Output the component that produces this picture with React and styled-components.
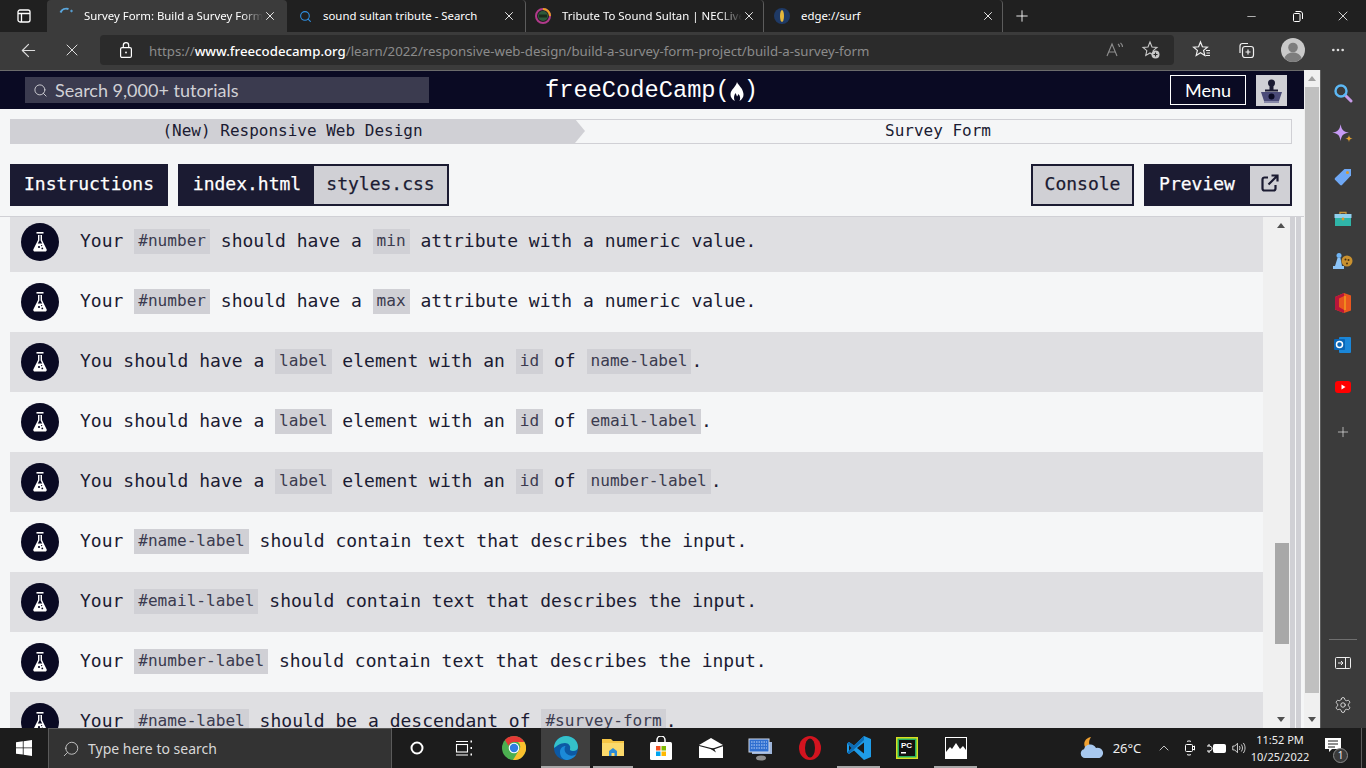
import React from "react";
import styled, { createGlobalStyle } from "styled-components";
import { ArrowLeft, X, Plus, Minus, Search, Settings, ChevronUp, Ellipsis } from "lucide-react";

const GlobalStyle = createGlobalStyle`
  html, body {
    margin: 0;
    padding: 0;
    width: 1366px;
    height: 768px;
    overflow: hidden;
    background: #202020;
  }
  * { box-sizing: border-box; }
`;

const UI_FONT = `"Noto Sans", "Open Sans", sans-serif`;
const MONO_FONT = `"DejaVu Sans Mono", "Liberation Mono", monospace`;

// === Browser chrome ===
const Screen = styled.div`
  width: 1366px;
  height: 768px;
  display: flex;
  flex-direction: column;
  overflow: hidden;
`;

const TabStrip = styled.div`
  height: 32px;
  flex: none;
  display: flex;
  align-items: stretch;
  background: #202020;
  color: #fff;
  font: 11.4px ${UI_FONT};
`;

const StripIcon = styled.div`
  width: 47px;
  display: flex;
  align-items: center;
  justify-content: center;
`;

const Tab = styled.div`
  width: ${({ $width }) => $width}px;
  display: flex;
  align-items: center;
  padding: 0 ${({ $closeRight }) => $closeRight || 10}px 0 ${({ $iconLeft }) => $iconLeft || 12}px;
  border-radius: 4px 4px 0 0;
  background: ${({ $active }) => ($active ? "#3b3b3b" : "transparent")};
  border-right: ${({ $divider }) => ($divider ? "1px solid #5c5c5c" : "none")};
  background-clip: padding-box;
`;

const TabIcon = styled.div`
  width: 16px;
  height: 16px;
  margin-right: ${({ $gap }) => $gap || 9}px;
  flex: none;
  display: flex;
  align-items: center;
  justify-content: center;
`;

const TabTitle = styled.span`
  flex: 1;
  white-space: nowrap;
  overflow: hidden;
  padding-bottom: 2px;
  -webkit-mask-image: ${({ $fade }) => ($fade ? "linear-gradient(90deg, #000 88%, transparent)" : "none")};
  mask-image: ${({ $fade }) => ($fade ? "linear-gradient(90deg, #000 88%, transparent)" : "none")};
`;

const NewTab = styled.div`
  width: 37px;
  display: flex;
  align-items: center;
  justify-content: center;
`;

const WindowControls = styled.div`
  margin-left: auto;
  display: flex;
`;

const WindowButton = styled.div`
  width: 46px;
  display: flex;
  align-items: center;
  justify-content: center;
`;

const AddressRow = styled.div`
  height: 38px;
  flex: none;
  display: flex;
  align-items: center;
  background: #3b3b3b;
  padding-bottom: 2px;
  color: #ddd;
`;

const NavIcon = styled.div`
  width: ${({ $w }) => $w || 44}px;
  height: 30px;
  flex: none;
  display: flex;
  align-items: center;
  justify-content: center;
  padding-left: ${({ $pad }) => $pad || 0}px;
`;

const AddressField = styled.div`
  width: 1074px;
  height: 30px;
  margin-left: 6px;
  margin-right: 5px;
  flex: none;
  display: flex;
  align-items: center;
  padding: 0 5px 0 19px;
  background: #2b2b2b;
  border-radius: 4px;
  font: 13.25px ${UI_FONT};
  color: #8b8b8b;
`;

const Url = styled.span`
  margin-left: 16px;
  padding-top: 2px;
  flex: 1;
  white-space: nowrap;
  b {
    font-weight: 500;
    color: #fff;
  }
`;

const Middle = styled.div`
  flex: 1;
  min-height: 0;
  display: flex;
`;

const Viewport = styled.div`
  width: 1304px;
  display: flex;
  flex-direction: column;
  background: #f5f6f7;
  color: #1b1b32;
  border-top: 1px solid #6b6b6b;
`;

const OuterScrollbar = styled.div`
  width: 16px;
  background: #f0f0f0;
  display: flex;
  flex-direction: column;
  align-items: center;
`;

const ArrowBox = styled.div`
  height: 17px;
  flex: none;
  display: flex;
  align-items: center;
  justify-content: center;
`;

const Triangle = styled.div`
  width: 0;
  height: 0;
  border-left: 4px solid transparent;
  border-right: 4px solid transparent;
  border-bottom: ${({ $down, $color }) => ($down ? "none" : `5px solid ${$color}`)};
  border-top: ${({ $down, $color }) => ($down ? `5px solid ${$color}` : "none")};
`;

const OuterThumbSpace = styled.div`
  flex: 1;
  width: 100%;
  display: flex;
`;

const OuterThumb = styled.div`
  width: 14px;
  height: 606px;
  margin-left: 1px;
  background: #c0c0c0;
`;

const SideBar = styled.div`
  width: 46px;
  background: #3b3b3b;
  border-left: 1px solid #5c5c5c;
  display: flex;
  flex-direction: column;
  align-items: center;
  padding: 2px 1px 0 0;
`;

const SideIcon = styled.div`
  width: 44px;
  height: ${({ $h }) => $h || 42}px;
  flex: none;
  display: flex;
  align-items: center;
  justify-content: center;
`;

const SideRule = styled.div`
  width: 28px;
  height: 1px;
  background: #6f6f6f;
  margin-top: auto;
  margin-bottom: 4px;
`;

// === freeCodeCamp page ===
const TopNav = styled.div`
  height: 38px;
  flex: none;
  display: grid;
  grid-template-columns: 1fr auto 1fr;
  align-items: center;
  background: #0a0a23;
  padding: 0 17px 0 25px;
`;

const SearchBox = styled.div`
  width: 404px;
  height: 26px;
  display: flex;
  align-items: center;
  gap: 7px;
  padding-left: 8px;
  background: #3b3b4f;
  color: #d0d0d5;
  font: 18px Lato, sans-serif;
`;

const Logo = styled.div`
  margin: 1px 9px 0 0;
  display: flex;
  align-items: center;
  color: #fff;
  font: 23.7px/32px "Liberation Mono", monospace;
`;

const NavRight = styled.div`
  justify-self: end;
  display: flex;
  align-items: center;
  gap: 10px;
`;

const MenuButton = styled.div`
  width: 76px;
  height: 30px;
  display: flex;
  align-items: center;
  justify-content: center;
  border: 1px solid #fff;
  color: #fff;
  font: 18px Lato, sans-serif;
`;

const Avatar = styled.div`
  width: 31px;
  height: 31px;
  background: #d0d0d5;
  display: flex;
  align-items: center;
  justify-content: center;
`;

const Breadcrumbs = styled.div`
  height: 25px;
  flex: none;
  margin: 10px 12px 0 10px;
  display: flex;
  font: 16px/23px ${MONO_FONT};
`;

const CrumbLeft = styled.div`
  width: 565px;
  background: #d0d0d5;
  text-align: center;
  position: relative;
  &::after {
    content: "";
    position: absolute;
    left: 100%;
    top: 0;
    border-left: 10px solid #d0d0d5;
    border-top: 12.5px solid transparent;
    border-bottom: 12.5px solid transparent;
  }
`;

const CrumbRight = styled.div`
  flex: 1;
  text-align: center;
  border: 1px solid #d0d0d5;
  border-left: none;
  padding-left: 10px;
  line-height: 21px;
`;

const ToolRow = styled.div`
  height: 42px;
  flex: none;
  margin: 20px 12px 10px 10px;
  display: flex;
  gap: 10px;
`;

const ToolGroup = styled.div`
  display: flex;
  background: #1b1b32;
  padding: ${({ $inset }) => ($inset ? "2px" : "0")};
  margin-left: ${({ $push }) => ($push ? "auto" : "0")};
`;

const ToolButton = styled.div`
  width: ${({ $w }) => $w}px;
  display: flex;
  align-items: center;
  justify-content: center;
  padding: 0 ${({ $nudge }) => $nudge || 0}px 4px 0;
  background: ${({ $light }) => ($light ? "#d0d0d5" : "#1b1b32")};
  color: ${({ $light }) => ($light ? "#1b1b32" : "#fff")};
  font: 18px ${MONO_FONT};
  -webkit-text-stroke: 0.25px ${({ $light }) => ($light ? "#1b1b32" : "#fff")};
`;

const ListArea = styled.div`
  flex: 1;
  min-height: 0;
  display: flex;
  border-top: 1px solid #d0d0d5;
  padding-left: 10px;
  overflow: hidden;
`;

const TestList = styled.div`
  width: 1253px;
  margin-top: -5px;
`;

const TestRow = styled.div`
  height: 60px;
  display: flex;
  align-items: center;
  padding-left: 11px;
  background: ${({ $shaded }) => ($shaded ? "#dfdfe2" : "transparent")};
`;

const Flask = styled.div`
  width: 38px;
  height: 38px;
  flex: none;
  border-radius: 50%;
  background: #0a0a23;
  display: flex;
  align-items: center;
  justify-content: center;
`;

const TestText = styled.p`
  margin: 0 0 0 21px;
  padding-bottom: 2px;
  font: 18px/26px ${MONO_FONT};
  white-space: pre;
`;

const Code = styled.code`
  display: inline-block;
  margin-top: 1px;
  background: #d0d0d5;
  color: #3b3b4f;
  font: 16.1px/23px ${MONO_FONT};
  padding: 0 4px 2px;
  vertical-align: top;
`;

const InnerScrollbar = styled.div`
  width: 27px;
  background: #f0f0f0;
  display: flex;
  flex-direction: column;
  align-items: center;
`;

const InnerArrow = styled.div`
  height: 17px;
  flex: none;
  width: 100%;
  padding-left: 9px;
  display: flex;
  align-items: center;
  justify-content: center;
`;

const InnerTrack = styled.div`
  flex: 1;
  width: 100%;
  padding: 309px 1px 0 12px;
`;

const InnerThumb = styled.div`
  height: 101px;
  background: #a8a8a8;
`;

const Rails = styled.div`
  flex: 1;
  display: flex;
  background: #f5f6f7;
`;

const Rail = styled.div`
  width: 5px;
  background: #d0d0d5;
  margin-right: 1px;
`;

// === Taskbar ===
const Taskbar = styled.div`
  height: 40px;
  flex: none;
  display: flex;
  align-items: stretch;
  background: #1c1c1c;
  color: #fff;
`;

const StartButton = styled.div`
  width: 48px;
  display: flex;
  align-items: center;
  justify-content: center;
`;

const TaskSearch = styled.div`
  width: 344px;
  display: flex;
  align-items: center;
  gap: 8px;
  padding-left: 13px;
  background: #333;
  border: 1px solid #5a5a5a;
  border-bottom: none;
  color: #d8d8d8;
  font: 14px ${UI_FONT};
`;

const TaskApps = styled.div`
  display: flex;
`;

const TaskApp = styled.div`
  width: ${({ $w }) => $w || 49}px;
  display: flex;
  align-items: center;
  justify-content: center;
  background: ${({ $active }) => ($active ? "#3f3f3f" : "transparent")};
  position: relative;
  &::after {
    content: "";
    display: ${({ $running }) => ($running ? "block" : "none")};
    position: absolute;
    left: ${({ $active }) => ($active ? 0 : 3)}px;
    right: ${({ $active }) => ($active ? 0 : 3)}px;
    bottom: 0;
    height: 2px;
    background: #a8a8a8;
  }
`;

const Tray = styled.div`
  margin-left: auto;
  display: flex;
  align-items: center;
  font: 13px ${UI_FONT};
  color: #eee;
`;

const TrayItem = styled.div`
  width: ${({ $w }) => $w}px;
  display: flex;
  align-items: center;
  justify-content: center;
`;

const Clock = styled.div`
  width: 68px;
  text-align: center;
  font: 11px/17px ${UI_FONT};
`;

const NotifyBox = styled.div`
  width: 38px;
  height: 100%;
  display: flex;
  align-items: center;
  justify-content: center;
  padding: 0 0 6px 0;
  position: relative;
`;

const NotifyBadge = styled.div`
  position: absolute;
  right: 4px;
  bottom: 5px;
  width: 15px;
  height: 15px;
  border-radius: 50%;
  background: #3a3a3a;
  border: 1px solid #8a8a8a;
  font: 10px/13px ${UI_FONT};
  text-align: center;
`;

const ShowDesktop = styled.div`
  width: 1px;
  height: 100%;
  margin: 0 4px 0 9px;
  background: #5c5c5c;
`;

// === Drawings ===
const FlaskIcon = () => (
  <svg width="14" height="20" viewBox="0 0 14 20">
    <rect x="3.5" y="0" width="7" height="1.6" fill="#fff" />
    <path d="M5 3h4v5l4.6 9.2c.5 1.2-.2 2.3-1.4 2.3H1.8C.6 19.5-.1 18.4.4 17.2L5 8z" fill="#fff" />
    <path d="M6.4 3.2h1.2v5.2l1.6 3.2H4.8l1.6-3.2z" fill="#0a0a23" />
    <circle cx="6" cy="15" r="1.1" fill="#0a0a23" />
    <circle cx="9.3" cy="16.4" r="0.9" fill="#0a0a23" />
    <circle cx="8.6" cy="13.6" r="0.7" fill="#0a0a23" />
  </svg>
);

const FccFlame = () => (
  <svg width="14" height="19" viewBox="0 0 14 19" style={{ marginTop: 2 }}>
    <path
      d="M7 0C8 3 13 6 13.5 12C13.8 15 12 17.5 9.5 19C10.5 17 10.5 14 8.5 12C8 13 7.5 14 7 14.5C6.5 13 6 12 5.5 11C3.8 13.5 3.5 16.5 4.8 19C2 17.5 .3 15 .5 12C.8 7.5 6 5 7 0z"
      fill="#fff"
    />
  </svg>
);

const TabsIcon = () => (
  <svg width="16" height="16" viewBox="0 0 16 16" fill="none" stroke="#fff" strokeWidth="1.3">
    <rect x="2" y="2" width="12" height="12" rx="2" />
    <path d="M2 5.5h12M5.5 5.5V14" />
  </svg>
);

const Spinner = () => (
  <svg width="16" height="16" viewBox="0 0 16 16" fill="none" stroke="#5aa7de" strokeWidth="2" style={{ marginTop: -8 }}>
    <path d="M1.5 8.5A6.5 6.5 0 0 1 9.5 5" />
    <circle cx="12.5" cy="7" r="0.8" fill="#5aa7de" strokeWidth="1" />
  </svg>
);

const NecFavicon = () => (
  <svg width="16" height="16" viewBox="0 0 16 16">
    <circle cx="8" cy="8" r="7" fill="none" stroke="#b03a8a" strokeWidth="2" />
    <path d="M8 1a7 7 0 0 1 7 7" fill="none" stroke="#e8a020" strokeWidth="2" />
    <circle cx="8" cy="8" r="5" fill="#2e5a3a" />
    <rect x="4" y="6.5" width="8" height="3" fill="#1a2a1a" />
  </svg>
);

const SurfFavicon = () => (
  <svg width="16" height="16" viewBox="0 0 16 16">
    <circle cx="8" cy="8" r="8" fill="#1f3a66" />
    <ellipse cx="8" cy="8" rx="2" ry="6" fill="#e5b73b" />
  </svg>
);

const RestoreIcon = () => (
  <svg width="11" height="11" viewBox="0 0 11 11" fill="none" stroke="#fff">
    <rect x="1.5" y="2.5" width="6.5" height="8" rx="1" />
    <path d="M3.5 0.5H8c1.5 0 2.5 1 2.5 2.5v5" />
  </svg>
);

const LockIcon = () => (
  <svg width="14" height="16" viewBox="0 0 14 16" fill="none" stroke="#fff" strokeWidth="1.2">
    <rect x="1.6" y="5.6" width="10.8" height="9.8" rx="1.5" />
    <path d="M4.3 5.6V3.4a2.7 2.7 0 0 1 5.4 0v2.2" />
    <circle cx="7" cy="10.5" r="0.9" fill="#fff" stroke="none" />
  </svg>
);

const ReadAloudIcon = () => (
  <svg width="18" height="16" viewBox="0 0 18 16" fill="none" stroke="#8f8f8f" strokeWidth="1.1">
    <path d="M1 14L6 2l5 12M3 10h6" />
    <path d="M12 2c1 .8 1.5 1.7 1.5 3M14.5 .8c1.3 1.2 2 2.5 2 4.2" />
  </svg>
);

const StarPlusIcon = () => (
  <svg width="20" height="20" viewBox="0 0 20 20" fill="none" stroke="#c8c8c8" strokeWidth="1.1">
    <path d="M9 2l2 5 5 .4-3.8 3.3 1 4.8L9 13l-4.2 2.5 1-4.8L2 7.4 7 7z" />
    <circle cx="14.5" cy="14.5" r="4" fill="#c8c8c8" stroke="none" />
    <path d="M14.5 12.5v4M12.5 14.5h4" stroke="#2b2b2b" />
  </svg>
);

const FavoritesIcon = () => (
  <svg width="20" height="20" viewBox="0 0 20 20" fill="none" stroke="#f0f0f0" strokeWidth="1.2">
    <path d="M8.5 2l1.9 4.8 5 .4-3.8 3.2 1.2 5-4.3-2.7-4.3 2.7 1.2-5L1.6 7.2l5-.4z" />
    <path d="M14 10.5h4M14.5 13h3.5M13.5 15.5h4.5" />
  </svg>
);

const CollectionsIcon = () => (
  <svg width="20" height="20" viewBox="0 0 20 20" fill="none" stroke="#f0f0f0" strokeWidth="1.2">
    <path d="M4 13V6c0-1.5 1-2.5 2.5-2.5H12" />
    <rect x="6.5" y="6.5" width="11" height="11" rx="2.5" />
    <path d="M12 9.5v5M9.5 12h5" />
  </svg>
);

const ProfileIcon = () => (
  <svg width="24" height="24" viewBox="0 0 24 24">
    <circle cx="12" cy="12" r="12" fill="#c9c9c9" />
    <circle cx="12" cy="9.5" r="4.8" fill="#7d7d7d" />
    <path d="M3.5 20c1.5-4 5-5.5 8.5-5.5s7 1.5 8.5 5.5A12 12 0 0 1 12 24a12 12 0 0 1-8.5-4z" fill="#7d7d7d" />
  </svg>
);

const CamperAvatar = () => (
  <svg width="25" height="28" viewBox="0 0 25 28">
    <circle cx="12.5" cy="7" r="3.5" fill="#1b1b32" />
    <rect x="10.5" y="10" width="4" height="4" fill="#1b1b32" />
    <rect x="6" y="13.5" width="13" height="2" fill="#1b1b32" />
    <path d="M2 16h21l-3 9H5z" fill="#4b4b78" />
    <circle cx="12.5" cy="20.5" r="3" fill="#0a0a23" />
    <rect x="5" y="25" width="15" height="2" fill="#8787a8" />
  </svg>
);

const ExternalIcon = () => (
  <svg width="18" height="18" viewBox="0 0 18 18" fill="none" stroke="#1b1b32" strokeWidth="2.2">
    <path d="M7 3.5H3.5A2 2 0 0 0 1.5 5.5v9a2 2 0 0 0 2 2h9a2 2 0 0 0 2-2V11" />
    <path d="M7.5 10.5L16 2M10.5 1.5h6v6" />
  </svg>
);

const SideSearch = () => (
  <svg width="20" height="20" viewBox="0 0 20 20" fill="none">
    <path d="M12 12l6 6" stroke="#c79be8" strokeWidth="3" strokeLinecap="round" />
    <circle cx="8" cy="8" r="5.5" stroke="#5cb8f5" strokeWidth="2.4" />
  </svg>
);

const Sparkle = () => (
  <svg width="24" height="24" viewBox="0 0 20 20">
    <path d="M8 1c.8 4.5 2 6.2 7 7-5 .8-6.2 2.5-7 7-.8-4.5-2-6.2-7-7 5-.8 6.2-2.5 7-7z" fill="#c79bf5" />
    <path d="M15 10c.3 2 .9 2.7 3 3-2.1.3-2.7 1-3 3-.3-2-.9-2.7-3-3 2.1-.3 2.7-1 3-3z" fill="#e0a030" />
  </svg>
);

const TagIcon = () => (
  <svg width="18" height="18" viewBox="0 0 18 18">
    <path d="M10.5 1H17v6.5l-9 9.5c-.6.5-1.2.5-1.8 0L1 11.8c-.5-.6-.5-1.2 0-1.8z" fill="#6fa8f5" />
    <circle cx="13.5" cy="4.5" r="1.5" fill="#d99a2b" />
  </svg>
);

const ToolboxIcon = () => (
  <svg width="18" height="16" viewBox="0 0 18 16">
    <path d="M6 3V1.5h6V3" fill="none" stroke="#c9973a" strokeWidth="1.3" />
    <rect x="0.5" y="3" width="17" height="4" fill="#8fd0ee" />
    <rect x="1" y="7" width="16" height="8" fill="#2fb5a8" />
    <circle cx="9" cy="8" r="1.4" fill="#d99a2b" />
  </svg>
);

const ChessCookie = () => (
  <svg width="20" height="18" viewBox="0 0 20 18">
    <circle cx="6" cy="3.5" r="2.5" fill="#6fb4f5" />
    <path d="M4.5 6h3l1.5 8H11v3H0v-3h2z" fill="#8cc4f7" />
    <circle cx="14" cy="9" r="5.5" fill="#c9912f" />
    <circle cx="12.5" cy="7.5" r="1" fill="#4a3010" />
    <circle cx="15.5" cy="8" r="1" fill="#4a3010" />
    <circle cx="14" cy="11.5" r="1" fill="#4a3010" />
  </svg>
);

const OfficeIcon = () => (
  <svg width="16" height="20" viewBox="0 0 16 20">
    <path d="M0 4l9-4 7 2.5v15L9 20l-9-3.5z" fill="#e8561e" />
    <path d="M0 4l9-4v3L4 5.5V14l5 3v3l-9-3.5z" fill="#b9153a" />
    <path d="M9 3h2v14H9z" fill="#f08a1e" />
  </svg>
);

const OutlookIcon = () => (
  <svg width="18" height="18" viewBox="0 0 18 18">
    <rect x="5" y="1" width="12" height="16" rx="1" fill="#1a86d8" />
    <rect x="0" y="3" width="11" height="11" rx="1" fill="#0a65b5" />
    <circle cx="5.5" cy="8.5" r="3" fill="none" stroke="#fff" strokeWidth="1.5" />
  </svg>
);

const YoutubeIcon = () => (
  <svg width="16" height="12" viewBox="0 0 16 12">
    <rect width="16" height="12" rx="3" fill="#f00" />
    <path d="M6.5 3.5v5l4-2.5z" fill="#fff" />
  </svg>
);

const SplitIcon = () => (
  <svg width="16" height="12" viewBox="0 0 16 12" fill="none" stroke="#eee">
    <rect x="0.5" y="0.5" width="15" height="11" rx="1" />
    <path d="M10.5 .5v11" />
    <path d="M3 6h5M6 4l2 2-2 2" />
  </svg>
);

const WinLogo = () => (
  <svg width="16" height="16" viewBox="0 0 16 16" fill="#fff">
    <path d="M0 2.3L6.8 1.3V7.5H0zM7.6 1.2L16 0v7.5H7.6zM0 8.3h6.8v6.3L0 13.7zM7.6 8.3H16V16l-8.4-1.2z" />
  </svg>
);

const Cortana = () => (
  <svg width="16" height="16" viewBox="0 0 16 16" fill="none" stroke="#fff" strokeWidth="2">
    <circle cx="8" cy="8" r="5.5" />
  </svg>
);

const TaskView = () => (
  <svg width="18" height="18" viewBox="0 0 18 18" fill="none" stroke="#fff" strokeWidth="1.1">
    <rect x="1.5" y="5.5" width="11" height="7.5" />
    <path d="M1 2.5h12M1 16h12" />
    <path d="M15.5 2.5h1.5M15.5 9h1.5M15.5 15.5h1.5" strokeWidth="1.8" />
  </svg>
);

const ChromeIcon = () => (
  <svg width="24" height="24" viewBox="0 0 24 24">
    <circle cx="12" cy="12" r="12" fill="#4caf50" />
    <path d="M12 0a12 12 0 0 1 10.4 6H12a6 6 0 0 0-5.6 3.8L3 4a12 12 0 0 1 9-4z" fill="#e53935" />
    <path d="M22.4 6A12 12 0 0 1 11 24l5.5-9A6 6 0 0 0 16 6z" fill="#fbc02d" />
    <circle cx="12" cy="12" r="5.3" fill="#fff" />
    <circle cx="12" cy="12" r="4.2" fill="#2f7de1" />
  </svg>
);

const EdgeIcon = () => (
  <svg width="24" height="24" viewBox="0 0 24 24">
    <circle cx="12" cy="12" r="12" fill="#0c59a4" />
    <path d="M0 12C0 5 5.5 0 12 0c7 0 12 5 12 11 0 2.5-2 4-5 4-2 0-3.5-.7-3-2 1-3-1.5-6-5-6-5 0-8 3-11 5z" fill="#35c1c9" />
    <path d="M12 24c-4-1-6-4-6-8 0-4 3-6 5.5-6-1.5 2-1.5 7 3 9 3 1.3 6 .5 8-1-2 3.5-6 6-10.5 6z" fill="#1b8ad8" />
  </svg>
);

const FolderIcon = () => (
  <svg width="22" height="20" viewBox="0 0 22 20">
    <path d="M0 1h9l2 2h11v15H0z" fill="#f6c544" />
    <path d="M0 5h22v13H0z" fill="#fbd96b" />
    <path d="M7 18v-5l4-3 4 3v5h-2.5v-3h-3v3z" fill="#2b8bd8" />
  </svg>
);

const StoreIcon = () => (
  <svg width="22" height="24" viewBox="0 0 22 24">
    <path d="M7 6V4a4 4 0 0 1 8 0v2" fill="none" stroke="#fff" strokeWidth="1.5" />
    <rect y="6" width="22" height="18" rx="1.5" fill="#fff" />
    <rect x="6" y="10" width="4.5" height="4.5" fill="#f25022" />
    <rect x="11.5" y="10" width="4.5" height="4.5" fill="#7fba00" />
    <rect x="6" y="15.5" width="4.5" height="4.5" fill="#00a4ef" />
    <rect x="11.5" y="15.5" width="4.5" height="4.5" fill="#ffb900" />
  </svg>
);

const MailIcon = () => (
  <svg width="24" height="20" viewBox="0 0 24 20">
    <path d="M0 7l12-7 12 7v13H0z" fill="#fff" />
    <path d="M0 7.5L14 11l10-3.5" fill="none" stroke="#1c1c1c" strokeWidth="1.2" />
    <path d="M11 10.5l6 4-2-4z" fill="#1c1c1c" />
  </svg>
);

const RemoteIcon = () => (
  <svg width="26" height="26" viewBox="0 0 26 26">
    <rect x="4" y="7" width="20" height="12" fill="#9db4d8" />
    <rect x="1" y="4" width="20" height="13" fill="#2f6fd0" stroke="#cfd8e8" />
    <path d="M3 7h16M3 10h16M3 13h16" stroke="#bcd4f5" strokeDasharray="1.5 1" />
    <ellipse cx="13" cy="23" rx="5" ry="2.5" fill="#8f8f8f" />
  </svg>
);

const OperaIcon = () => (
  <svg width="22" height="24" viewBox="0 0 22 24">
    <ellipse cx="11" cy="12" rx="11" ry="12" fill="#d3141f" />
    <ellipse cx="11" cy="12" rx="5" ry="9.5" fill="#1c1c1c" />
  </svg>
);

const VscodeIcon = () => (
  <svg width="24" height="24" viewBox="0 0 24 24">
    <path d="M17 0l7 3v18l-7 3-10-9.5L2 18l-2-1.5v-9L2 6l5 3.5z" fill="#1f9ce8" />
    <path d="M17 6.500L10 12l7 5.5z" fill="#1c1c1c" />
    <path d="M2 8.5v7l3.5-3.5z" fill="#1c1c1c" />
    <path d="M17 0l-10 9.5L2 6 0 7.500 4.5 12 0 16.500 2 18l15-14z" fill="#0d6cb5" />
  </svg>
);

const PycharmIcon = () => (
  <svg width="22" height="22" viewBox="0 0 22 22">
    <rect width="22" height="22" fill="#d8e020" />
    <rect x="1.5" y="1.5" width="19" height="19" fill="#24b060" />
    <rect x="3" y="3" width="16" height="16" fill="#111" />
    <text x="5" y="11" fontSize="8" fontWeight="700" fontFamily="Liberation Sans, sans-serif" fill="#fff">PC</text>
    <rect x="5" y="15" width="5" height="1.5" fill="#fff" />
  </svg>
);

const PhotosIcon = () => (
  <svg width="22" height="22" viewBox="0 0 22 22">
    <rect width="22" height="22" fill="#fff" />
    <path d="M1 1h20v12l-3-4-3 3-4-6-4 6-2-2-4 5z" fill="#1c1c1c" />
  </svg>
);

const WeatherIcon = () => (
  <svg width="24" height="22" viewBox="0 0 24 22">
    <path d="M11 0C5 1 3 6 5 10c1.500 3 6 4 9 2C9 11 7.500 5 11 0z" fill="#f0a030" />
    <path d="M5 21a4.500 4.500 0 0 1-1-8.800A6.500 6.500 0 0 1 16 11a5 5 0 0 1 3.500 10z" fill="#a8c8ee" />
  </svg>
);

const MeetIcon = () => (
  <svg width="12" height="16" viewBox="0 0 12 16" fill="none" stroke="#fff">
    <rect x="1.5" y="4.5" width="7" height="7" rx="1" />
    <path d="M8.5 7l2-1v4l-2-1M3 1.5c1-.7 3-.7 4 0M3 14.5c1 .7 3 .7 4 0" />
  </svg>
);

const BatteryIcon = () => (
  <svg width="20" height="14" viewBox="0 0 20 14" fill="none" stroke="#fff">
    <rect x="6.5" y="3.5" width="12" height="8" rx="1" fill="#fff" />
    <path d="M0 5h3l2 1.5v2L3 10H0M2 5V3M2 12v-2" />
  </svg>
);

const SpeakerIcon = () => (
  <svg width="18" height="16" viewBox="0 0 18 16" fill="none" stroke="#fff">
    <path d="M1 5.5h2.500L7 2v12l-3.500-3.500H1z" />
    <path d="M9.500 5.500c1 1.500 1 3.500 0 5M12 3.500c2 2.500 2 6.500 0 9M14.500 1.500c3 3.500 3 9.500 0 13" />
  </svg>
);

const NotifyIcon = () => (
  <svg width="16" height="14" viewBox="0 0 16 14" fill="#fff">
    <path d="M0 0h16v11H7l-3 3v-3H0z" />
    <path d="M3 3h10M3 6h10M3 9h7" stroke="#1c1c1c" />
  </svg>
);

// === Data ===
const code = (text) => ({ code: text });

const TESTS = [
  ["Your ", code("#number"), " should have a ", code("min"), " attribute with a numeric value."],
  ["Your ", code("#number"), " should have a ", code("max"), " attribute with a numeric value."],
  ["You should have a ", code("label"), " element with an ", code("id"), " of ", code("name-label"), "."],
  ["You should have a ", code("label"), " element with an ", code("id"), " of ", code("email-label"), "."],
  ["You should have a ", code("label"), " element with an ", code("id"), " of ", code("number-label"), "."],
  ["Your ", code("#name-label"), " should contain text that describes the input."],
  ["Your ", code("#email-label"), " should contain text that describes the input."],
  ["Your ", code("#number-label"), " should contain text that describes the input."],
  ["Your ", code("#name-label"), " should be a descendant of ", code("#survey-form"), "."],
];

const SIDE_ICONS = [SideSearch, Sparkle, TagIcon, ToolboxIcon, ChessCookie, OfficeIcon, OutlookIcon, YoutubeIcon];

const TASK_APPS = [
  { Icon: Cortana, w: 49 },
  { Icon: TaskView, w: 46 },
  { Icon: ChromeIcon, w: 54 },
  { Icon: EdgeIcon, w: 49, running: true, active: true },
  { Icon: FolderIcon, w: 46, running: true },
  { Icon: StoreIcon, w: 49 },
  { Icon: MailIcon, w: 51 },
  { Icon: RemoteIcon, w: 49 },
  { Icon: OperaIcon, w: 49 },
  { Icon: VscodeIcon, w: 49, running: true },
  { Icon: PycharmIcon, w: 48 },
  { Icon: PhotosIcon, w: 49, running: true },
];

function TestItem({ parts, shaded }) {
  return (
    <TestRow $shaded={shaded}>
      <Flask>
        <FlaskIcon />
      </Flask>
      <TestText>
        {parts.map((part, i) =>
          typeof part === "string" ? <span key={i}>{part}</span> : <Code key={i}>{part.code}</Code>
        )}
      </TestText>
    </TestRow>
  );
}

export default function App() {
  return (
    <Screen>
      <GlobalStyle />
      <TabStrip>
        <StripIcon>
          <TabsIcon />
        </StripIcon>
        <Tab $width={240} $active>
          <TabIcon>
            <Spinner />
          </TabIcon>
          <TabTitle $fade>Survey Form: Build a Survey Form</TabTitle>
          <X size={14} strokeWidth={1.5} />
        </Tab>
        <Tab $width={239} $divider $iconLeft={10} $closeRight={9}>
          <TabIcon $gap={10}>
            <Search size={13} color="#2f8fe0" strokeWidth={2} />
          </TabIcon>
          <TabTitle>sound sultan tribute - Search</TabTitle>
          <X size={14} strokeWidth={1.5} />
        </Tab>
        <Tab $width={238} $divider $iconLeft={9} $closeRight={7}>
          <TabIcon $gap={11}>
            <NecFavicon />
          </TabIcon>
          <TabTitle $fade>Tribute To Sound Sultan | NECLive</TabTitle>
          <X size={14} strokeWidth={1.5} />
        </Tab>
        <Tab $width={239} $divider $iconLeft={10} $closeRight={7}>
          <TabIcon $gap={11}>
            <SurfFavicon />
          </TabIcon>
          <TabTitle>edge://surf</TabTitle>
          <X size={14} strokeWidth={1.5} />
        </Tab>
        <NewTab>
          <Plus size={18} strokeWidth={1.2} />
        </NewTab>
        <WindowControls>
          <WindowButton>
            <Minus size={13} strokeWidth={1.2} />
          </WindowButton>
          <WindowButton>
            <RestoreIcon />
          </WindowButton>
          <WindowButton>
            <X size={16} strokeWidth={1.2} />
          </WindowButton>
        </WindowControls>
      </TabStrip>

      <AddressRow>
        <NavIcon $w={50} $pad={6}>
          <ArrowLeft size={21} strokeWidth={1.3} />
        </NavIcon>
        <NavIcon>
          <X size={20} strokeWidth={1.2} />
        </NavIcon>
        <AddressField>
          <LockIcon />
          <Url>
            https://<b>www.freecodecamp.org</b>/learn/2022/responsive-web-design/build-a-survey-form-project/build-a-survey-form
          </Url>
          <NavIcon $w={36}>
            <ReadAloudIcon />
          </NavIcon>
          <NavIcon $w={36}>
            <StarPlusIcon />
          </NavIcon>
        </AddressField>
        <NavIcon $w={45}>
          <FavoritesIcon />
        </NavIcon>
        <NavIcon $w={44}>
          <CollectionsIcon />
        </NavIcon>
        <NavIcon $w={50}>
          <ProfileIcon />
        </NavIcon>
        <NavIcon $w={40}>
          <Ellipsis size={16} />
        </NavIcon>
      </AddressRow>

      <Middle>
        <Viewport>
          <TopNav>
            <SearchBox>
              <Search size={15} strokeWidth={1.5} />
              Search 9,000+ tutorials
            </SearchBox>
            <Logo>
              freeCodeCamp(
              <FccFlame />)
            </Logo>
            <NavRight>
              <MenuButton>Menu</MenuButton>
              <Avatar>
                <CamperAvatar />
              </Avatar>
            </NavRight>
          </TopNav>
          <Breadcrumbs>
            <CrumbLeft>(New) Responsive Web Design</CrumbLeft>
            <CrumbRight>Survey Form</CrumbRight>
          </Breadcrumbs>
          <ToolRow>
            <ToolGroup>
              <ToolButton $w={158}>Instructions</ToolButton>
            </ToolGroup>
            <ToolGroup $inset>
              <ToolButton $w={134}>index.html</ToolButton>
              <ToolButton $w={133} $light>
                styles.css
              </ToolButton>
            </ToolGroup>
            <ToolGroup $inset $push>
              <ToolButton $w={99} $light>
                Console
              </ToolButton>
            </ToolGroup>
            <ToolGroup $inset>
              <ToolButton $w={104} $nudge={2}>
                Preview
              </ToolButton>
              <ToolButton $w={40} $light>
                <ExternalIcon />
              </ToolButton>
            </ToolGroup>
          </ToolRow>
          <ListArea>
            <TestList>
              {TESTS.map((parts, i) => (
                <TestItem key={i} parts={parts} shaded={i % 2 === 0} />
              ))}
            </TestList>
            <InnerScrollbar>
              <InnerArrow>
                <Triangle $color="#505050" />
              </InnerArrow>
              <InnerTrack>
                <InnerThumb />
              </InnerTrack>
              <InnerArrow>
                <Triangle $down $color="#505050" />
              </InnerArrow>
            </InnerScrollbar>
            <Rails>
              <Rail />
              <Rail />
            </Rails>
          </ListArea>
        </Viewport>
        <OuterScrollbar>
          <ArrowBox>
            <Triangle $color="#a0a0a0" />
          </ArrowBox>
          <OuterThumbSpace>
            <OuterThumb />
          </OuterThumbSpace>
          <ArrowBox>
            <Triangle $down $color="#505050" />
          </ArrowBox>
        </OuterScrollbar>
        <SideBar>
          {SIDE_ICONS.map((Icon, i) => (
            <SideIcon key={i}>
              <Icon />
            </SideIcon>
          ))}
          <SideIcon $h={48}>
            <Plus size={16} strokeWidth={1} color="#eee" />
          </SideIcon>
          <SideRule />
          <SideIcon $h={38}>
            <SplitIcon />
          </SideIcon>
          <SideIcon $h={46}>
            <Settings size={18} strokeWidth={1.1} color="#eee" />
          </SideIcon>
        </SideBar>
      </Middle>

      <Taskbar>
        <StartButton>
          <WinLogo />
        </StartButton>
        <TaskSearch>
          <Search size={18} strokeWidth={1.1} style={{ transform: "scaleX(-1)" }} />
          Type here to search
        </TaskSearch>
        <TaskApps>
          {TASK_APPS.map(({ Icon, w, running, active }, i) => (
            <TaskApp key={i} $w={w} $running={running} $active={active}>
              <Icon />
            </TaskApp>
          ))}
        </TaskApps>
        <Tray>
          <TrayItem $w={24}>
            <WeatherIcon />
          </TrayItem>
          <TrayItem $w={46}>26°C</TrayItem>
          <TrayItem $w={28}>
            <ChevronUp size={16} strokeWidth={1.2} />
          </TrayItem>
          <TrayItem $w={24}>
            <MeetIcon />
          </TrayItem>
          <TrayItem $w={30}>
            <BatteryIcon />
          </TrayItem>
          <TrayItem $w={14}>
            <SpeakerIcon />
          </TrayItem>
          <Clock>
            11:52 PM
            <br />
            10/25/2022
          </Clock>
          <NotifyBox>
            <NotifyIcon />
            <NotifyBadge>1</NotifyBadge>
          </NotifyBox>
          <ShowDesktop />
        </Tray>
      </Taskbar>
    </Screen>
  );
}
